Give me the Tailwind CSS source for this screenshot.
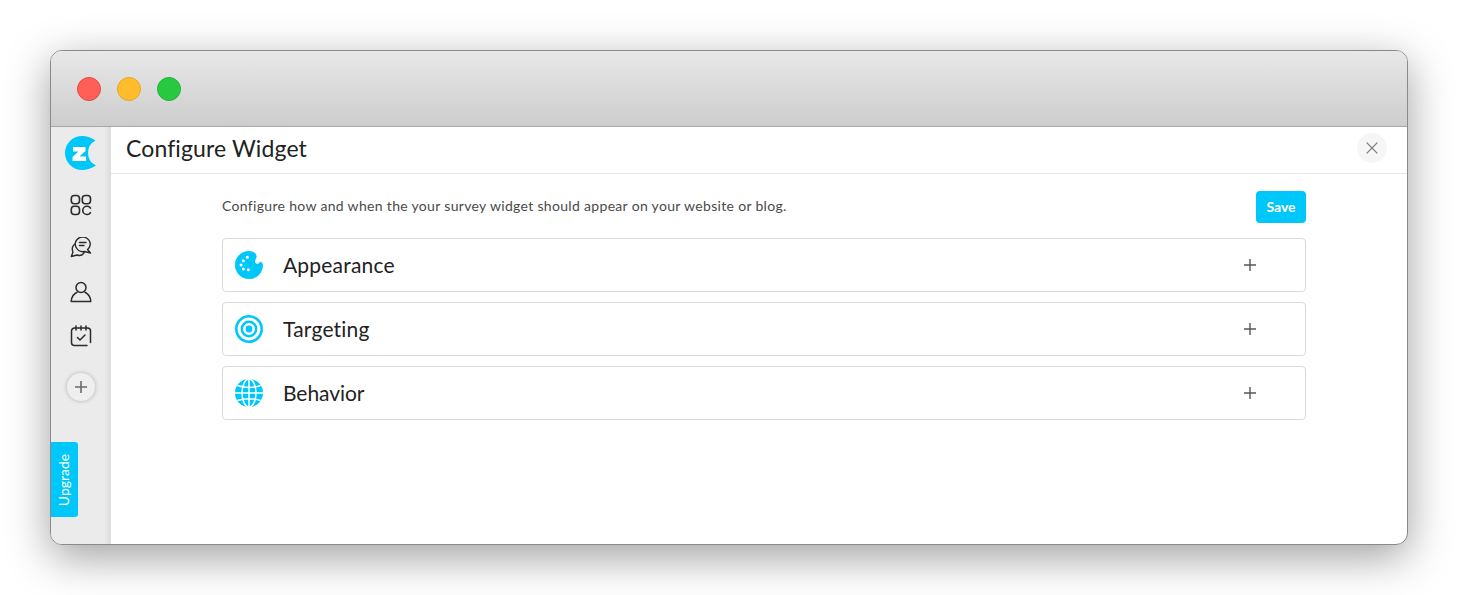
<!DOCTYPE html>
<html lang="en">
<head>
    <meta charset="UTF-8">
    <title>Configure Widget</title>
    <script src="https://cdn.jsdelivr.net/npm/@tailwindcss/browser@4"></script>
</head>
<body class="bg-white h-[595px] overflow-hidden font-['Lato',sans-serif]">
    <div class="pt-[50px] pl-[50px]">
        <!-- Window -->
        <div class="relative w-[1358px] h-[495px] rounded-[12px] border border-[#8a8a8a] overflow-hidden flex flex-col bg-white shadow-[0_12px_44px_rgba(0,0,0,0.38)]">
            <!-- Title bar -->
            <div class="h-[76px] shrink-0 flex items-center gap-4 pl-[26px] bg-gradient-to-b from-[#e8e8e8] to-[#cdcdcd] border-b border-[#a8a8a8]">
                <span class="w-6 h-6 rounded-full bg-[#ff5f57] border border-[#e5483f]"></span>
                <span class="w-6 h-6 rounded-full bg-[#ffbd2e] border border-[#e5a823]"></span>
                <span class="w-6 h-6 rounded-full bg-[#28c840] border border-[#20b536]"></span>
            </div>
            <div class="flex flex-1 min-h-0">
                <!-- Sidebar -->
                <aside class="relative w-[60px] shrink-0 bg-[#ebebeb] flex flex-col items-center shadow-[inset_-6px_0_6px_-4px_rgba(0,0,0,0.09)]">
                    <svg class="mt-[9px] ml-[1px]" width="34" height="34" viewBox="0 0 34 34">
                        <path fill="#00c7f9" d="M17 0C22 0 27 2 30.500 4.500A14 14 0 0 0 31 29.500C27 32 22 34 17 34A17 17 0 0 1 17 0Z"/>
                        <path fill="#fff" d="M8 11h12.500v4l-6 5.500h6.500V25H7.500v-4l6-5.500H8Z"/>
                    </svg>
                    <svg class="mt-[24px]" width="22" height="22" viewBox="0 0 22 22" fill="none" stroke="#2b2b2b" stroke-width="1.600">
                        <rect x="1.300" y="1.500" width="8.200" height="8.200" rx="3"/>
                        <rect x="12.300" y="1.500" width="8.200" height="8.200" rx="3"/>
                        <rect x="1.300" y="12.300" width="8.200" height="8.200" rx="3"/>
                        <path stroke-linecap="round" d="M20.500 14.200a3.600 3.600 0 0 0-2.800-1.900h-.8a4.100 4.100 0 0 0 0 8.200h.8a3.600 3.600 0 0 0 2.800-1.900"/>
                    </svg>
                    <svg class="mt-[21px]" width="22" height="22" viewBox="0 0 22 22" fill="none" stroke="#2b2b2b" stroke-width="1.400" stroke-linejoin="round" stroke-linecap="round">
                        <path d="M6.500 11A7.500 7 0 1 1 17.500 12.500L20.500 16 14.500 14.500A7.500 7 0 0 1 6.500 11Z"/>
                        <path d="M5 7C2.500 8.500 1.500 12 3 15L1.300 19.500 7 18C10 19 13 18 14.500 15"/>
                        <path d="M9.500 5.500h6.500M9.500 8.500h4.500"/>
                    </svg>
                    <svg class="mt-[22px]" width="22" height="22" viewBox="0 0 22 22" fill="none" stroke="#2b2b2b" stroke-width="1.500" stroke-linejoin="round">
                        <circle cx="11" cy="6.500" r="5"/>
                        <path d="M7.500 11C4 12.500 1.500 15.500 1.200 20.500H20.800C20.500 15.500 18 12.500 14.500 11"/>
                    </svg>
                    <svg class="mt-[22px]" width="22" height="22" viewBox="0 0 22 22" fill="none" stroke="#2b2b2b" stroke-width="1.500" stroke-linecap="round" stroke-linejoin="round">
                        <path d="M17 20.500H4.500a3 3 0 0 1-3-3V6a3 3 0 0 1 3-3h13a3 3 0 0 1 3 3v11.500"/>
                        <path d="M6 1v4M11 1v4M16 1v4M7.500 12.500l2.500 2.500 5-5"/>
                    </svg>
                    <div class="mt-[26px] w-7 h-7 rounded-full bg-[#efefef] shadow-[0_0_4px_rgba(0,0,0,0.25)] flex items-center justify-center">
                        <svg width="14" height="14" viewBox="0 0 14 14" stroke="#6b6b6b" stroke-width="1.600"><path d="M7 1v12M1 7h12"/></svg>
                    </div>
                    <!-- Upgrade tab -->
                    <div class="absolute left-0 top-[315px] w-[27px] h-[75px] bg-[#00c7f9] rounded-r-[3px] flex items-center justify-center">
                        <span class="-rotate-90 text-white text-[14px] leading-none whitespace-nowrap">Upgrade</span>
                    </div>
                </aside>
                <!-- Main panel -->
                <main class="flex-1 min-w-0 flex flex-col">
                    <header class="h-[47px] shrink-0 flex items-center justify-between pl-[15px] pr-[20px] pb-[4px] border-b border-[#e6e6ea]">
                        <h1 class="text-[23px] tracking-[0.12px] text-[#222] leading-none">Configure Widget</h1>
                        <button class="w-[30px] h-[30px] rounded-full bg-[#f6f6f6] flex items-center justify-center">
                            <svg width="12" height="12" viewBox="0 0 12 12" stroke="#777" stroke-width="1.200"><path d="M.7.7l10.600 10.600M11.300.7L.7 11.300"/></svg>
                        </button>
                    </header>
                    <div class="pl-[111px] pr-[101px]">
                        <div class="h-[64px] flex items-center justify-between">
                            <p class="mb-[2px] text-[14px] tracking-[0.32px] text-[#4a4a4a]">Configure how and when the your survey widget should appear on your website or blog.</p>
                            <button class="mt-[2px] pb-[2px] w-[50px] h-[32px] rounded-[4px] bg-[#00c7f9] text-white text-[14px] font-bold">Save</button>
                        </div>
                        <div class="flex flex-col gap-[10px]">
                            <div class="h-[54px] flex items-center border border-[#d9d9d9] rounded-[4px] pl-3 pr-[49px]">
                                <svg width="28" height="28" viewBox="0 0 28 28">
                                    <path fill="#00c7f9" d="M14 0C18 0 21 2 21.500 5C22 8 19.500 9 20 11C20.500 13 23 13.500 24.500 11.500C25.500 10.500 27.500 11 28 14A14 14 0 1 1 14 0Z"/>
                                    <g fill="#fff"><circle cx="12.300" cy="6.300" r="1.500"/><circle cx="8.300" cy="9.700" r="1.500"/><circle cx="6" cy="14" r="1.500"/><circle cx="8.300" cy="18" r="1.500"/><circle cx="13.300" cy="18.700" r="1.500"/></g>
                                </svg>
                                <span class="ml-[20px] flex-1 text-[21px] tracking-[0.2px] text-[#222]">Appearance</span>
                                <svg width="12" height="12" viewBox="0 0 12 12" stroke="#555" stroke-width="1.400"><path d="M6 0v12M0 6h12"/></svg>
                            </div>
                            <div class="h-[54px] flex items-center border border-[#d9d9d9] rounded-[4px] pl-3 pr-[49px]">
                                <svg width="28" height="28" viewBox="0 0 28 28" fill="none" stroke="#00c7f9">
                                    <circle cx="14" cy="14" r="12.700" stroke-width="2.600"/>
                                    <circle cx="14" cy="14" r="7.200" stroke-width="2.400"/>
                                    <circle cx="14" cy="14" r="3.400" fill="#00c7f9" stroke="none"/>
                                </svg>
                                <span class="ml-[20px] flex-1 text-[21px] tracking-[0.2px] text-[#222]">Targeting</span>
                                <svg width="12" height="12" viewBox="0 0 12 12" stroke="#555" stroke-width="1.400"><path d="M6 0v12M0 6h12"/></svg>
                            </div>
                            <div class="h-[54px] flex items-center border border-[#d9d9d9] rounded-[4px] pl-3 pr-[49px]">
                                <svg width="28" height="28" viewBox="0 0 28 28">
                                    <circle cx="14" cy="14" r="14" fill="#00c7f9"/>
                                    <g fill="none" stroke="#fff" stroke-width="1.500">
                                        <ellipse cx="14" cy="14" rx="7" ry="14"/>
                                        <path d="M14 0v28M0 14h28M2.500 6.500C9 9 19 9 25.500 6.500M2.500 21.500C9 19 19 19 25.500 21.500"/>
                                    </g>
                                </svg>
                                <span class="ml-[20px] flex-1 text-[21px] tracking-[-0.05px] text-[#222]">Behavior</span>
                                <svg width="12" height="12" viewBox="0 0 12 12" stroke="#555" stroke-width="1.400"><path d="M6 0v12M0 6h12"/></svg>
                            </div>
                        </div>
                    </div>
                </main>
            </div>
        </div>
    </div>
</body>
</html>
